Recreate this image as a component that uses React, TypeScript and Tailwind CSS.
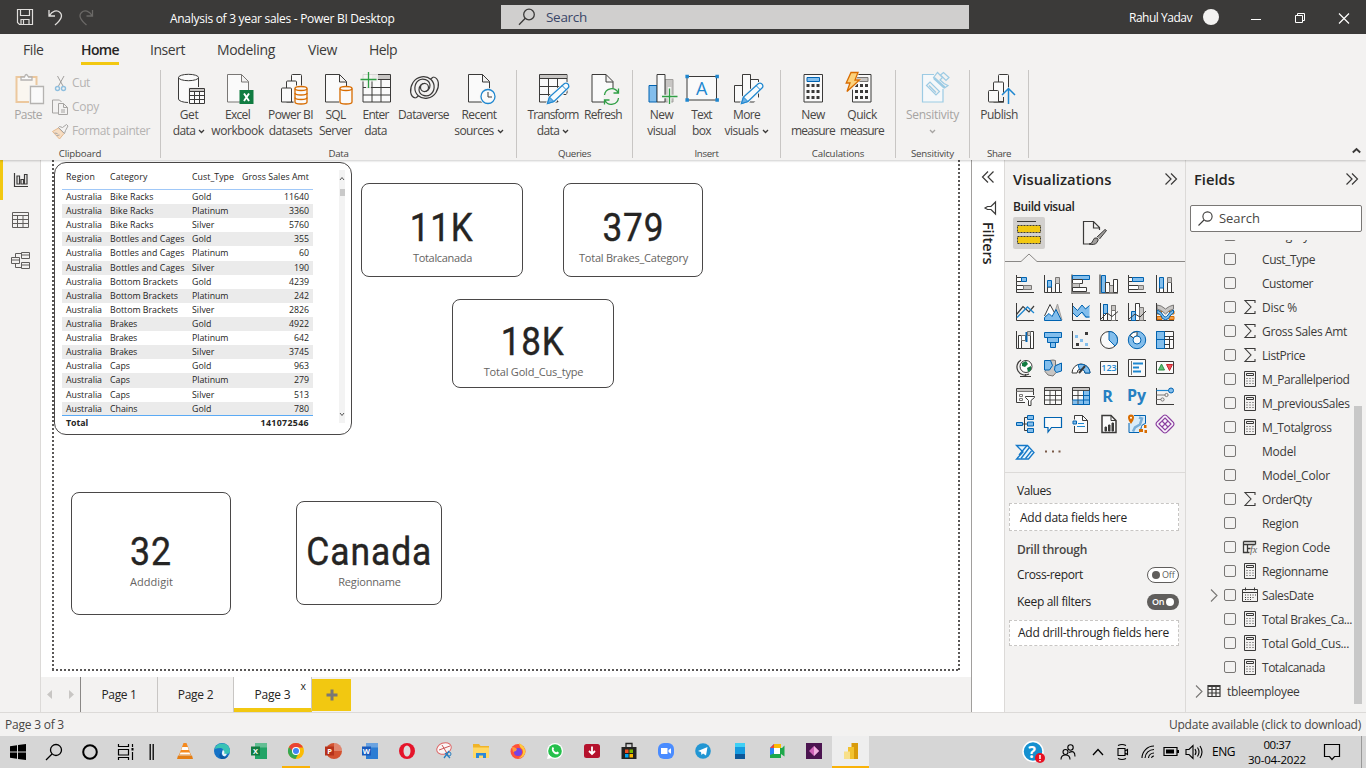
import { useLayoutEffect, useRef, useState, type ReactNode } from "react";

/* Text fitted to a known width, through tracking or horizontal scaling. */
function T({ w, children, className = "", stretch = false }: { w: number; children: string; className?: string; stretch?: boolean }) {
  const ref = useRef<HTMLSpanElement>(null);
  const [fit, setFit] = useState<{ letterSpacing?: string; transform?: string }>({});
  useLayoutEffect(() => {
    const el = ref.current;
    if (!el) return;
    const natural = el.getBoundingClientRect().width;
    if (stretch) setFit({ transform: `scaleX(${w / natural})` });
    else setFit({ letterSpacing: `${(w - natural) / children.length}px` });
  }, [w, children, stretch]);
  return (
    <span ref={ref} style={fit} className={`inline-block whitespace-nowrap ${className}`}>
      {children}
    </span>
  );
}

function Svg({ s = 20, h, children, className = "" }: { s?: number; h?: number; children: ReactNode; className?: string }) {
  return (
    <svg width={s} height={h ?? s} viewBox={`0 0 ${s} ${h ?? s}`} fill="none" className={`block shrink-0 overflow-visible ${className}`}>
      {children}
    </svg>
  );
}

const D = "#3b3a39";
const B = "#0063b1";
const LB = "#83beec";
const G = "#c8c6c4";
const OR = "#d86c00";

/* ---------- ribbon icons (34 x 34) ---------- */
const Page = ({ x = 6.5, stroke = D }) => (
  <path d={`M${x} 3.5h14l7 7v20.5h-21z M${x + 14} 3.5v7.5h7`} fill="#fafafa" stroke={stroke} />
);
const Pencil = () => (
  <>
    <path d="M11.5 32.5l2-6.500L28.500 12.500q2.500-1 4 1.200q1 2-.5 3.300L18 31z" fill="#fff" stroke="#f3f2f1" strokeWidth="3" />
    <path d="M11.500 32.500l2-6.500L28.500 12.500q2.500-1 4 1.200q1 2-.5 3.300L18 30.500z" fill="#f5fafd" stroke="#1e87d0" strokeWidth="1.300" />
    <path d="M11.500 32.500l2-6.500l4.500 4.500z" fill="#69afe5" stroke="#1e87d0" />
    <path d="M26 14.500l4.500 4.500" stroke="#1e87d0" />
  </>
);
const CylO = ({ x }: { x: number }) => (
  <g stroke={OR} strokeWidth="1.300" fill="#fafafa">
    <path d={`M${x} 17.500v13.500a6 2 0 0 0 12 0v-13.500`} />
    <ellipse cx={x + 6} cy="17.500" rx="6" ry="2" />
  </g>
);
const CalcDots = ({ x, y }: { x: number; y: number }) => (
  <path d={[0, 1, 2].map((r) => [0, 1, 2].map((c) => `M${x + c * 5} ${y + r * 6}h3v3h-3z`).join("")).join("")} fill={D} />
);

const R: Record<string, ReactNode> = {
  paste: (
    <g strokeWidth="1.300">
      <path d="M5.500 6h20v25h-20z" fill="#faf6f0" stroke="#ecc89e" strokeWidth="2" />
      <path d="M10 9V6h3.500q1.500-5 4 0H21v3z" fill="#fafafa" stroke="#b5b3b1" />
      <path d="M18 14h15v19H18z" fill="#f3f2f1" />
      <path d="M19.500 15.500h13v17h-13z" fill="#fafafa" stroke="#b5b3b1" />
    </g>
  ),
  get: (
    <>
      <path d="M6.500 6.500v21.500a10 3.500 0 0 0 20 0v-21.500" fill="#fafafa" stroke={D} />
      <ellipse cx="16.500" cy="6.500" rx="10" ry="3.200" fill="#fafafa" stroke={D} />
      <path d="M16 16h18v18H16z" fill="#f3f2f1" />
      <path d="M17.500 17.500h15v15h-15z" fill="#fafafa" stroke={D} />
      <path d="M18 18h14v2H18z" fill={G} />
      <path d="M17.500 20.500h15M17.500 24.500h15M17.500 28.500h15M22.500 20.500v12M27.500 20.500v12" stroke={D} />
    </>
  ),
  excel: (
    <>
      <Page stroke="#797775" />
      <path d="M18.500 19h14v14h-14z" fill="#107c41" />
      <path d="M23 22.500l5 7.500M28 22.500l-5 7.500" stroke="#fff" strokeWidth="1.900" />
    </>
  ),
  datasets: (
    <>
      <path d="M17.500 31V4.500q0-1 1-1h8q1 0 1 1V31z" fill="#fafafa" stroke={D} />
      <path d="M12.500 31V11q0-1 1-1h8q1 0 1 1v20z" fill="#fafafa" stroke={D} />
      <path d="M7.500 31V18q0-1 1-1h8q1 0 1 1v13z" fill="#fafafa" stroke={D} />
      <path d="M19.500 14.500h14.500V33H19.500z" fill="#f3f2f1" />
      <CylO x={21} />
      <path d="M21 22a6 2 0 0 0 12 0M21 26.500a6 2 0 0 0 12 0" stroke={OR} strokeWidth="1.300" />
    </>
  ),
  sql: (
    <>
      <Page />
      <path d="M20 15h14v18H20z" fill="#f3f2f1" />
      <CylO x={21} />
    </>
  ),
  enter: (
    <>
      <path d="M4 3.500h27.500v27.500H4z" fill="#fafafa" stroke={D} />
      <path d="M13 4h18v4H13z" fill={G} />
      <path d="M4 8.500h27.500M4 16.500h27.500M4 24h27.500M13 8.500V31M22 8.500V31" stroke={D} />
      <path d="M0 3h19v7.500H0zM7 0h5v18H7z" fill="#f3f2f1" opacity=".85" />
      <path d="M1.500 8.500h16M9.500 1v16" stroke="#2f9e44" strokeWidth="1.300" />
    </>
  ),
  dataverse: (
    <g stroke={D} strokeWidth="1.200">
      <path d="M8.500 27C3 26 2 18 6 11.500C10 5 19 4 24 8.500C28.500 13 28 20 23.500 23.500C19.500 26.500 12.500 24.500 12 19C11.800 14.500 15 12 18.500 12.500" />
      <path d="M26.500 6C32 7 33 15 29 21.500C25 28 16 29 11 24.500C6.500 20 7 13 11.500 9.500C15.500 6.500 22.500 8.500 23 14C23.200 18.500 20 21 16.500 20.500" />
      <path d="M8.500 27l3-2M26.500 6l-3 2" />
      <circle cx="17.500" cy="16.500" r="4" />
    </g>
  ),
  recent: (
    <>
      <Page />
      <circle cx="26" cy="25.500" r="8.500" fill="#f3f2f1" />
      <circle cx="26" cy="25.500" r="7" fill="#fafafa" stroke="#1e87d0" strokeWidth="1.300" />
      <path d="M26 21v5h4" stroke={D} />
    </>
  ),
  transform: (
    <>
      <path d="M3.500 3.500h27.500v27.500H3.500z" fill="#fafafa" stroke={D} />
      <path d="M4 4h26.500v3.500H4z" fill={G} />
      <path d="M3.500 7.500H31M3.500 15.500H31M3.500 23.500H31M12.500 7.500V31M21.500 7.500V31" stroke={D} />
      <path d="M19 34L34 20v14z" fill="#f3f2f1" />
      <Pencil />
    </>
  ),
  refresh: (
    <>
      <Page x={6} />
      <circle cx="25.500" cy="25.500" r="8.500" fill="#f3f2f1" />
      <path d="M18.500 24a7.200 7.200 0 0 1 13.500-2.500M32.500 27a7.200 7.200 0 0 1-13.500 2.500M32.500 17.500v4.500h-5M18.500 33.500V29h5" stroke="#2f9e44" strokeWidth="1.300" />
    </>
  ),
  visual: (
    <>
      <path d="M4 14.500h8V31H4z" fill={LB} stroke={B} />
      <path d="M20 8.500h8V31h-8z" fill={G} stroke="#a19f9d" />
      <path d="M12 3.500h8V31h-8z" fill="#fafafa" stroke={D} />
      <path d="M15 25.500h19M24.500 16v17" stroke="#f3f2f1" strokeWidth="3.500" />
      <path d="M17 25.500h15.500M24.500 17.500v15.500" stroke="#2f9e44" strokeWidth="1.300" />
    </>
  ),
  textbox: (
    <>
      <path d="M2 5.500h29.500V29H2z" fill="#fafafa" stroke={D} />
      <path d="M0 4h3.500v3.500H0zM30 4h3.500v3.500H30zM0 27.500h3.500V31H0zM30 27.500h3.500V31H30z" fill="#1e87d0" transform="translate(.4 -.2)" />
      <text x="16.700" y="23.500" textAnchor="middle" fontSize="18" fill="#1e87d0" fontFamily="Open Sans">A</text>
    </>
  ),
  more: (
    <>
      <path d="M4.500 14.500h8V31h-8zM20.500 8.500h8V31h-8zM12.500 3.500h8V31h-8z" fill="#fafafa" stroke={D} />
      <path d="M22 34l12-14v14z" fill="#f3f2f1" />
      <Pencil />
    </>
  ),
  measure: (
    <>
      <path d="M8 3.500h18.500V31H8z" fill="#fafafa" stroke={D} />
      <path d="M11 6.500h12.500v4H11z" fill={LB} stroke={B} />
      <CalcDots x={10.500} y={13} />
    </>
  ),
  quick: (
    <>
      <path d="M7.500 3.500h18.500V31H7.500z" fill="#fafafa" stroke={D} />
      <path d="M10.500 6.500H23v4H10.500z" fill={G} stroke="#797775" />
      <CalcDots x={10} y={13} />
      <path d="M6 0h9l-3.500 8h5L3 24l3-10H0z" fill="#f3f2f1" />
      <path d="M6 1.500h7L10 9h4.500L2 20.500L5 12H1.200z" fill="#fcd27c" stroke={OR} strokeWidth="1.300" />
    </>
  ),
  sensitivity: (
    <g stroke="#9ccbe4" strokeWidth="1.200">
      <path d="M18 3.500H6.500V31H27V18" fill="#f5f8fa" />
      <path d="M10.500 14.500l3.500-3.500L23.500 20.500l-3.500 3.500zM13 14.500l7 7" fill="#f3f2f1" />
      <path d="M17.500 6.500l4-5 5 5-2.500 2.500 4 3.500 4 2-3.500 2.500z" fill="#f3f2f1" />
      <path d="M24.500 4l3-2.500 5.500 5-3 3z" fill="#f3f2f1" />
      <path d="M18 7l10.500 9.500" strokeWidth="2.500" />
    </g>
  ),
  publish: (
    <>
      <path d="M16.500 31V4.500q0-1 1-1h8q1 0 1 1V31z" fill="#fafafa" stroke={D} />
      <path d="M11.500 31V12q0-1 1-1h8q1 0 1 1v19z" fill="#fafafa" stroke={D} />
      <path d="M6.500 20.500q0-1 1-1h8q1 0 1 1V31h-9q-1 0-1-1z" fill="#fafafa" stroke={D} />
      <path d="M17.500 26l9-10 8 9v9H22v-3.500h-4.500z" fill="#f3f2f1" />
      <path d="M17 30.500h5M21.500 26v4.500" stroke={D} />
      <path d="M26.500 33V17.500M20 24l6.500-6.500L33 24" stroke="#1e87d0" strokeWidth="1.500" />
    </>
  ),
};

const Caret = ({ c = D }) => (
  <Svg s={7} h={5}>
    <path d="M1 1l2.500 2.500L6 1" stroke={c} strokeWidth="1.300" />
  </Svg>
);

type Line = [string, number];
function Item({ icon, width, a, b, caret, muted }: { icon: string; width: string; a: Line; b?: Line; caret?: boolean; muted?: boolean }) {
  return (
    <div className={`flex shrink-0 flex-col items-center pt-px text-[12px] leading-4 ${width} ${muted ? "text-[#a6a4a2]" : "text-[#484644]"}`}>
      <Svg s={34}>{R[icon]}</Svg>
      <div className="mt-[2px] flex h-4"><T w={a[1]}>{a[0]}</T></div>
      <div className="flex h-4 items-center gap-[3px]">
        {b && <T w={b[1]}>{b[0]}</T>}
        {caret && <Caret c={muted ? "#a6a4a2" : D} />}
      </div>
    </div>
  );
}

function Group({ width, label, pad = "", children }: { width: string; label: Line; pad?: string; children: ReactNode }) {
  return (
    <div className={`flex h-[88px] shrink-0 flex-col border-r border-[#c8c6c4] ${width}`}>
      <div className={`flex h-[76px] shrink-0 ${pad}`}>{children}</div>
      <div className="flex h-3 justify-center text-[9.700px] leading-[15px] text-[#484644]"><T w={label[1]}>{label[0]}</T></div>
    </div>
  );
}

function Ribbon() {
  const tabs: [string, number, string][] = [
    ["Insert", 35, "ml-[31px]"],
    ["Modeling", 58, "ml-8"],
    ["View", 29, "ml-[33px]"],
    ["Help", 28, "ml-8"],
  ];
  return (
    <div className="relative z-10 h-[126px] shrink-0 bg-[#f3f2f1] shadow-[0_1px_2px_rgba(0,0,0,0.2)]">
      <div className="flex h-9 items-start pl-[23px] text-[14px] leading-8 text-[#3b3a39]">
        <T w={20.5}>File</T>
        <div className="ml-[37.5px] h-[31px] border-b-[3px] border-[#f2c811] leading-8 text-[#252423]">
          <T w={38} className="font-semibold">Home</T>
        </div>
        {tabs.map(([t, w, m]) => (
          <div key={t} className={m}><T w={w}>{t}</T></div>
        ))}
      </div>
      <div className="flex">
        <Group width="w-[161px]" label={["Clipboard", 42.5]}>
          <Item icon="paste" width="w-[52px] pl-1" a={["Paste", 27.5]} muted />
          <div className="flex flex-col pt-px text-[12px] text-[#b5b3b1]">
            <div className="flex h-6 items-center gap-[3px]">
              <Svg s={17}>
                <path d="M5.500 1l5.500 10M12 1L6.500 11" stroke="#a19f9d" />
                <circle cx="5.500" cy="13.500" r="2" stroke="#8fbfdf" strokeWidth="1.400" />
                <circle cx="11.500" cy="13.500" r="2" stroke="#8fbfdf" strokeWidth="1.400" />
              </Svg>
              <T w={18}>Cut</T>
            </div>
            <div className="flex h-6 items-center gap-[3px]">
              <Svg s={17}>
                <path d="M6.500 14H.5V1h7l2 2" stroke="#a6a4a2" />
                <path d="M6.500 4.500h5l4 4v7h-9zM11.500 4.500v4h4M9 11h4M9 13h4" stroke="#a6a4a2" />
              </Svg>
              <T w={27}>Copy</T>
            </div>
            <div className="flex h-6 items-center gap-[3px]">
              <Svg s={17}>
                <path d="M.5 8.500l6-3.500 5.500 5.500-4.500 5.500z" fill="#f6ddc3" stroke="#e5b98e" />
                <path d="M6.500 4.500l6 6 1-3 2.500-4.500-1.500-1.500-4 3-3-1zM2.500 10l3 .5M4.500 12.500l3-.5" stroke="#a6a4a2" />
              </Svg>
              <T w={78}>Format painter</T>
            </div>
          </div>
        </Group>
        <Group width="w-[356px]" label={["Data", 20]} pad="pl-1">
          <Item icon="get" width="w-[48px]" a={["Get", 18.5]} b={["data", 22.5]} caret />
          <Item icon="excel" width="w-[49px]" a={["Excel", 25]} b={["workbook", 52.5]} />
          <Item icon="datasets" width="w-[57px]" a={["Power BI", 45]} b={["datasets", 43.5]} />
          <Item icon="sql" width="w-[33px]" a={["SQL", 20]} b={["Server", 33]} />
          <Item icon="enter" width="w-[47px]" a={["Enter", 26]} b={["data", 22.5]} />
          <Item icon="dataverse" width="w-[49px]" a={["Dataverse", 51]} />
          <Item icon="recent" width="w-[62px]" a={["Recent", 35]} b={["sources", 39.5]} caret />
        </Group>
        <Group width="w-[116px]" label={["Queries", 33]} pad="pl-2.5">
          <Item icon="transform" width="w-[52px]" a={["Transform", 51]} b={["data", 22.5]} caret />
          <Item icon="refresh" width="w-[48px]" a={["Refresh", 38]} />
        </Group>
        <Group width="w-[148px]" label={["Insert", 24]} pad="pl-2">
          <Item icon="visual" width="w-[41px]" a={["New", 23.5]} b={["visual", 28.5]} />
          <Item icon="textbox" width="w-[39px]" a={["Text", 20.5]} b={["box", 19]} />
          <Item icon="more" width="w-[51px]" a={["More", 27]} b={["visuals", 34]} caret />
        </Group>
        <Group width="w-[115px]" label={["Calculations", 52.5]} pad="pl-2">
          <Item icon="measure" width="w-[48px]" a={["New", 23.5]} b={["measure", 44]} />
          <Item icon="quick" width="w-[50px]" a={["Quick", 29.5]} b={["measure", 44]} />
        </Group>
        <Group width="w-[74px]" label={["Sensitivity", 43]} pad="justify-center">
          <Item icon="sensitivity" width="w-[74px]" a={["Sensitivity", 53]} caret muted />
        </Group>
        <Group width="w-[59px]" label={["Share", 24]} pad="justify-center">
          <Item icon="publish" width="w-[58px]" a={["Publish", 37.5]} />
        </Group>
        <div className="flex flex-1 items-end justify-end pb-1 pr-[5px]">
          <Svg s={9} h={7}><path d="M.8 5.500L4.500 2l3.700 3.500" stroke={D} strokeWidth="1.900" /></Svg>
        </div>
      </div>
    </div>
  );
}

function TitleBar() {
  return (
    <div className="flex h-[34px] shrink-0 items-center bg-[#3b3a39] text-white">
      <div className="flex w-[170px] items-center pl-4">
        <Svg s={18}>
          <path d="M1.500 1.500h15v15h-13l-2-2zM4.500 1.500v6h9v-6M5 16.500v-5h8v5M7.500 12v4" stroke="#e1dfdd" strokeWidth="1.200" />
        </Svg>
        <Svg s={18} className="ml-[13px]">
          <path d="M2 2v6h6M2.500 7.500C5 3 10 1.500 13 4.500c3.500 3.500.500 7.500-5 12.500" stroke="#e1dfdd" strokeWidth="1.300" />
        </Svg>
        <Svg s={18} className="ml-3">
          <path d="M15.500 2v6h-6M15 7.500C12.500 3 7.500 1.500 4.500 4.500C1 8 4 12 9.500 17" stroke="#6b6967" strokeWidth="1.300" />
        </Svg>
      </div>
      <div className="w-[331px] pt-1 text-[12px] text-white"><T w={224.6}>Analysis of 3 year sales - Power BI Desktop</T></div>
      <div className="flex h-6 w-[468px] items-center gap-[10px] bg-[#d0cfce] pl-[17px] text-[13.500px] text-[#3a4668]">
        <Svg s={18}>
          <circle cx="11" cy="6.500" r="5.300" stroke={D} strokeWidth="1.300" />
          <path d="M7.300 10.300L1 16.700" stroke={D} strokeWidth="1.300" />
        </Svg>
        <T w={41} className="pt-px">Search</T>
      </div>
      <div className="flex flex-1 items-center pl-[160px]">
        <span className="pt-px text-[12px]"><T w={63}>Rahul Yadav</T></span>
        <div className="ml-[11px] size-4 rounded-full bg-[#f3f2f1]" />
        <Svg s={12} className="ml-[31px] mt-px"><path d="M1 7.500h10" stroke="#fff" /></Svg>
        <Svg s={12} className="ml-[32px] mt-px"><path d="M1.500 3.500h7v7h-7zM3.500 3.500v-2h7v7h-2" stroke="#fff" /></Svg>
        <Svg s={12} className="ml-8 mt-px"><path d="M1 1.500l10 10M11 1.500l-10 10" stroke="#fff" strokeWidth="1.200" /></Svg>
      </div>
    </div>
  );
}

/* ---------- canvas ---------- */
const rows: [string, string, string][] = [
  ["Bike Racks", "Gold", "11640"],
  ["Bike Racks", "Platinum", "3360"],
  ["Bike Racks", "Silver", "5760"],
  ["Bottles and Cages", "Gold", "355"],
  ["Bottles and Cages", "Platinum", "60"],
  ["Bottles and Cages", "Silver", "190"],
  ["Bottom Brackets", "Gold", "4239"],
  ["Bottom Brackets", "Platinum", "242"],
  ["Bottom Brackets", "Silver", "2826"],
  ["Brakes", "Gold", "4922"],
  ["Brakes", "Platinum", "642"],
  ["Brakes", "Silver", "3745"],
  ["Caps", "Gold", "963"],
  ["Caps", "Platinum", "279"],
  ["Caps", "Silver", "513"],
  ["Chains", "Gold", "780"],
];
const textWidth: Record<string, number> = {
  "Bike Racks": 43.5, "Bottles and Cages": 74.5, "Bottom Brackets": 68, Brakes: 27, Caps: 20, Chains: 27.5,
  Gold: 19.5, Platinum: 36.5, Silver: 22.5,
};

function TableVisual() {
  return (
    <div className="absolute left-[54px] top-[2px] flex h-[273px] w-[298px] rounded-[12px] border border-[#4a4848] bg-white pl-[7px] pt-[3px] text-[8.800px] text-[#252423]">
      <div className="w-[251px] shrink-0">
        <div className="grid h-6 grid-cols-[44px_82px_49px_76px] items-center border-b-[1.500px] border-b-[#a0c8f8]">
          <span className="pl-1"><T w={29}>Region</T></span>
          <span className="pl-1"><T w={37.5}>Category</T></span>
          <span className="pl-1"><T w={42}>Cust_Type</T></span>
          <span className="pr-1 text-right"><T w={67}>Gross Sales Amt</T></span>
        </div>
        {rows.map(([c, t, v], i) => (
          <div key={i} className={`grid h-[14.12px] grid-cols-[44px_82px_49px_76px] items-center pt-px leading-[13px] ${i % 2 ? "bg-[#ebebeb]" : ""}`}>
            <span className="pl-1"><T w={36}>Australia</T></span>
            <span className="pl-1"><T w={textWidth[c]}>{c}</T></span>
            <span className="pl-1"><T w={textWidth[t]}>{t}</T></span>
            <span className="pr-1 text-right"><T w={v.length * 5}>{v}</T></span>
          </div>
        ))}
        <div className="relative -mt-px flex h-[17px] items-center justify-between border-t border-t-[#5aaaf5] px-1 font-bold">
          <T w={22}>Total</T>
          <T w={48.5}>141072546</T>
        </div>
      </div>
      <div className="ml-[26px] mt-[4px] flex h-[253px] w-[6px] flex-col items-center justify-between bg-[#f3f3f3] py-1.5">
        <div className="flex flex-col items-center">
          <Svg s={6} h={5}><path d="M1 4l2-2.500L5 4" stroke="#555" /></Svg>
          <div className="mt-2 h-[7px] w-[5px] bg-[#c9c9c9]" />
        </div>
        <Svg s={6} h={5}><path d="M1 1l2 2.500L5 1" stroke="#555" /></Svg>
      </div>
    </div>
  );
}

function Card({ pos, value, label, pad }: { pos: string; value: Line; label: Line; pad: string }) {
  return (
    <div className={`absolute flex flex-col items-center rounded-[8px] border border-[#4a4848] bg-white ${pos} ${pad}`}>
      <div className="flex h-[46px] items-center justify-center font-['Roboto',sans-serif] text-[39px] font-normal leading-[48px] text-[#252423] [-webkit-text-stroke:0.4px_#252423]">
        <T w={value[1]} stretch className="relative top-px tracking-[1px]">{value[0]}</T>
      </div>
      <div className="flex h-4 pl-px text-[11px] leading-4 text-[#666462]"><T w={label[1]}>{label[0]}</T></div>
    </div>
  );
}

const dotsV = "w-[2px] bg-[repeating-linear-gradient(180deg,#5a5857_0_2px,transparent_2px_4px)]";

function Canvas() {
  return (
    <div className="relative h-[517px] overflow-hidden bg-white">
      <div className={`absolute left-[11px] top-0 h-[511px] ${dotsV}`} />
      <div className={`absolute left-[917px] top-0 h-[511px] ${dotsV}`} />
      <div className="absolute left-[11px] top-[509px] h-[2px] w-[908px] bg-[repeating-linear-gradient(90deg,#5a5857_0_2px,transparent_2px_4px)]" />
      <div className="absolute -left-[41px] top-0">
        <TableVisual />
        <Card pos="left-[361px] top-[23px] w-[162px] h-[94px]" pad="pt-5" value={["11K", 64]} label={["Totalcanada", 59]} />
        <Card pos="left-[563px] top-[23px] w-[140px] h-[94px]" pad="pt-5" value={["379", 62]} label={["Total Brakes_Category", 109]} />
        <Card pos="left-[452px] top-[139px] w-[162px] h-[89px]" pad="pt-[18px]" value={["18K", 64]} label={["Total Gold_Cus_type", 99.5]} />
        <Card pos="left-[71px] top-[332px] w-[160px] h-[123px]" pad="pt-[35px]" value={["32", 42]} label={["Adddigit", 43]} />
        <Card pos="left-[296px] top-[341px] w-[146px] h-[104px]" pad="pt-[26px]" value={["Canada", 126]} label={["Regionname", 62.5]} />
      </div>
    </div>
  );
}

function PageTabs() {
  return (
    <div className="flex h-[35px] bg-[#f3f2f1] text-[12px] text-[#252423]">
      <div className="flex w-[40px] items-center justify-between border-r border-[#8a8886] pl-1.5 pr-1.5">
        <Svg s={5} h={9}><path d="M5 0v9L0 4.500z" fill={G} /></Svg>
        <Svg s={5} h={9}><path d="M0 0v9l5-4.500z" fill={G} /></Svg>
      </div>
      <div className="flex w-[77px] items-center justify-center border-r border-[#c8c6c4]"><T w={35}>Page 1</T></div>
      <div className="flex w-[76px] items-center justify-center border-r border-[#c8c6c4]"><T w={35.500}>Page 2</T></div>
      <div className="relative flex h-[35px] w-[78px] items-center justify-center border-b-[4px] border-r border-b-[#f2c811] border-r-[#c8c6c4] bg-white pt-1">
        <T w={36}>Page 3</T>
        <span className="absolute right-[5px] top-px text-[10.500px] leading-4">x</span>
      </div>
      <div className="mt-[2px] flex h-8 w-[39px] items-center justify-center bg-[#f2c811]">
        <Svg s={12}><path d="M6 .5v11M.5 6h11" stroke="#797775" strokeWidth="3" /></Svg>
      </div>
    </div>
  );
}

/* ---------- visual picker icons (20 x 20) ---------- */
const Ax = () => <path d="M1.500 1v17.500H19" stroke={D} />;
const visuals: ReactNode[] = [
  <><Ax /><path d="M1.500 3.500h5v4h-5zM1.500 11.500h7v4h-7z" fill="#fff" stroke={D} /><path d="M6.500 3.500h5v4h-5z" fill={LB} stroke={B} /><path d="M8.500 11.500h8v4h-8z" fill={G} stroke="#797775" /></>,
  <><Ax /><path d="M4.500 13h4v5.500h-4zM12.500 9.500h4v9h-4z" fill="#fff" stroke={D} /><path d="M4.500 6.500h4v6.500h-4z" fill={LB} stroke={B} /><path d="M12.500 3.500h4v6h-4z" fill={G} stroke="#797775" /></>,
  <><path d="M1 .5v18.500H19" stroke="#8a8886" strokeWidth="2" /><path d="M1.500 1.500h17v4h-17z" fill={LB} stroke={B} /><path d="M1.500 5.500h10v4h-10z" fill="#fff" stroke={D} /><path d="M1.500 9.500h7v4h-7z" fill={G} stroke="#797775" /><path d="M1.500 13.500h14v4h-14z" fill="#fff" stroke={D} /></>,
  <><path d="M1 .5v18.500H19" stroke="#8a8886" strokeWidth="2" /><path d="M2.500 1.500h4v17h-4z" fill={LB} stroke={B} /><path d="M6.500 8.500h4v10h-4z" fill="#fff" stroke={D} /><path d="M10.500 11.500h4v7h-4z" fill={G} stroke="#797775" /><path d="M14.500 5.500h4v13h-4z" fill="#fff" stroke={D} /></>,
  <><Ax /><path d="M1.500 3.500h4v4h-4zM1.500 11.500h10v4h-10z" fill="#fff" stroke={D} /><path d="M5.500 3.500h11v4h-11z" fill={LB} stroke={B} /><path d="M11.500 11.500h5v4h-5z" fill={G} stroke="#797775" /></>,
  <><Ax /><path d="M4.500 13h4v5.500h-4zM12.500 8.500h4v10h-4z" fill="#fff" stroke={D} /><path d="M4.500 3.500h4V14h-4z" fill={LB} stroke={B} /><path d="M12.500 3.500h4v5h-4z" fill={G} stroke="#797775" /></>,
  <><Ax /><path d="M1.500 12.500L8 4.500l6 5.500 5-6" stroke={D} strokeWidth="1.200" /><path d="M2 15.500L12.500 5l6.500 6" stroke="#1e87d0" strokeWidth="1.300" /></>,
  <><path d="M9 18l5.500-16 4.500 16z" fill={G} stroke="#a19f9d" /><path d="M1.500 14L7 2.500l6 11" fill="#fff" stroke={D} /><path d="M1.500 18.500v-3L6 11.500l3 3L13 7.500l5.500 11z" fill={LB} stroke={B} /></>,
  <><path d="M2 4l4.500 4.500L11 3l3 3.500 4.500-3v12l-4 .500-4-5-5 4L2 11z" fill={LB} /><path d="M2 4l4.500 4.500L11 3l3.500 4 4-3.500M2 11l4 4 5-5 4 5h3.500" stroke={B} /><Ax /></>,
  <><Ax /><path d="M4.500 2.500h4v16h-4z" fill="#fff" stroke={D} /><path d="M4.500 2.500h4v9h-4z" fill={LB} stroke={B} /><path d="M12.500 3.500h4v15h-4z" fill="#fff" stroke="#797775" /><path d="M12.500 3.500h4v5h-4z" fill={G} stroke="#797775" /><path d="M2 17l6-6 5 3.500 6-5" stroke={D} /></>,
  <><Ax /><path d="M8.500 1.500h4v17h-4z" fill="#fff" stroke={D} /><path d="M4.500 9.500h4v9h-4z" fill={LB} stroke={B} /><path d="M12.500 5.500h4v13h-4z" fill={G} stroke="#797775" /><path d="M2 17l6-5 5 3 6-6" stroke={D} /></>,
  <><path d="M2 9h4.500v3H2zM14.500 9H19v3h-4.500zM2 14.500h5v3H2zM14 14.500h5v3h-5z" fill="#f4a04d" stroke={OR} /><path d="M2 3q4 0 8.500 4Q14 4 18.500 3v4q-4.500 1-8 5Q7 8 2 7z" fill={G} stroke="#797775" /><path d="M2 8q4 1 6 5t5 0q2-4 5.500-5v3q-3 1-5 5.500-3 2.500-6 0-1-4.500-5.500-5.500z" fill={LB} stroke={B} /><path d="M1.500 1v17.500H19" stroke={D} /></>,
  <><Ax /><path d="M3.500 5.500h3v13h-3zM15.500 1.500h3v17h-3z" fill="#fff" stroke={D} /><path d="M6.500 5.500h4v5h-4z" fill="#fff" stroke="#797775" /><path d="M11.500 2v10" stroke={B} strokeWidth="2" /><path d="M12.500 1.500h3v4h-3z" fill={G} stroke="#797775" /></>,
  <><path d="M1.500 2.500h17v5h-17zM4.500 7.500h11v5h-11zM7.500 12.500h5v5h-5z" fill={LB} stroke={B} /></>,
  <><Ax /><path d="M14 2h3v3h-3zM5 13h3v3H5z" fill={D} /><path d="M4 5h3v3H4zM9 9h3v3H9zM14 13h3v3h-3z" fill={LB} /></>,
  <><circle cx="10" cy="10" r="8.500" fill="#fafafa" stroke={D} /><path d="M10 1.500v8.500l6 6A8.500 8.500 0 0 0 10 1.500z" fill={LB} stroke={B} /></>,
  <><circle cx="10" cy="10" r="6.300" stroke={LB} strokeWidth="4.500" /><path d="M3 5.500A8.500 8.500 0 0 1 10 1.500V6A4 4 0 0 0 6.500 8z" fill="#fff" stroke={D} /><circle cx="10" cy="10" r="8.700" stroke={B} /><circle cx="10" cy="10" r="4" fill="#fafafa" stroke={B} /></>,
  <><path d="M1.500 1.500h17v17h-17z" fill="#fafafa" stroke={D} /><path d="M1.500 1.500h8v17h-8z" fill={LB} stroke={B} /><path d="M1.500 9.500h8" stroke={B} /><path d="M9.500 9.500h9M9.500 6.500h9M14.500 6.500v12M9.500 14.500h5" stroke={D} /></>,
  <><circle cx="11" cy="8.500" r="6" fill="#fff" stroke={D} /><path d="M7 5l4-2 2 3-3 3-3-1zM12 10l4-2v4l-3 2z" fill="#107c41" /><path d="M6 2A8 8 0 0 0 14 16M10.500 16v3M5 18.500h11" stroke={D} strokeWidth="1.200" /></>,
  <><path d="M6.500 2.500q4-1 6 0v5l6-2-.500 7-4 1-4 4.500-5-1-3-3.500z" fill={G} stroke="#797775" /><path d="M1.500 2.500h6l2 5-3 4.500h-5zM12 8l6.500-3v8l-5 1.500-2-2.500z" fill={LB} stroke={B} /></>,
  <><path d="M1 15a9 9 0 0 1 18 0h-5a4 4 0 0 0-8 0z" fill="#fff" stroke={D} /><path d="M7 6.800A9 9 0 0 1 19 15h-5a4 4 0 0 0-5.500-3.500z" fill={LB} stroke={B} /><path d="M8 15l6-7" stroke={D} strokeWidth="2" /></>,
  <><path d="M1.500 3.500h17v13h-17z" fill="#fafafa" stroke={D} /><text x="10" y="13.400" textAnchor="middle" fontSize="9" fill="#1e87d0" fontFamily="Open Sans" fontWeight="600">123</text></>,
  <><path d="M1.500 1.500h17v17h-17z" fill="#fafafa" stroke={D} /><path d="M4.500 3v14" stroke="#797775" /><path d="M6 5.500h10M6 9.500h6M6 13.500h8" stroke="#1e87d0" strokeWidth="2" /></>,
  <><path d="M1.500 3.500h17v12h-17z" fill="#fafafa" stroke={D} /><path d="M3.500 12L6.500 6l3 6z" fill="#5fbf75" stroke="#2f8f44" /><path d="M11.500 6.500h6l-3 6z" fill="#f0525a" stroke="#c4262e" /></>,
  <><path d="M1.500 2.500h17v14h-17z" fill="#fafafa" /><path d="M10 16.500H1.500V2.500h17V9" stroke={D} /><path d="M2 3h16v2.500H2z" fill={G} /><path d="M1.500 5.500h17M4.500 8.500h3v2h-3zM4.500 12.500h3v2h-3z" stroke="#797775" /><path d="M10.500 10.500h9v1l-3.500 3v5h-2.500v-5l-3-3z" fill="#fff" stroke={D} /></>,
  <><path d="M1.500 1.500h17v17h-17z" fill="#fafafa" stroke={D} /><path d="M2 2h16v2.500H2z" fill={G} /><path d="M1.500 4.500h17M1.500 9.500h17M1.500 14h17M7 4.500v14M12.500 4.500v14" stroke={D} strokeWidth=".9" /></>,
  <><path d="M1.500 1.500h17v17h-17z" fill="#fafafa" stroke={D} /><path d="M2 2h16v2.500H2z" fill={G} /><path d="M12.500 5h6v13.500h-17V14h11z" fill={LB} /><path d="M1.500 4.500h17M1.500 9.500h17M7 4.500v14M12.500 4.500v5" stroke={D} strokeWidth=".9" /><path d="M12.500 5v13.500M1.500 14h17M1.500 18.500h17v-14M12.500 9.500h6" stroke={B} /></>,
  <text x="8.500" y="15.500" textAnchor="middle" fontSize="16" fill="#2680c2" fontFamily="Open Sans" fontWeight="700">R</text>,
  <text x="9.500" y="14.500" textAnchor="middle" fontSize="16" fill="#2680c2" fontFamily="Open Sans" fontWeight="700">Py</text>,
  <><path d="M1.500 2v16.500H19" stroke={D} /><path d="M1.500 4.500H13.500" stroke="#1e87d0" strokeWidth="1.200" /><path d="M1.500 9h8.500M1.500 13.500h4.500" stroke="#797775" /><circle cx="16" cy="4.500" r="2.500" fill={LB} stroke={B} /><circle cx="11.500" cy="9" r="1.600" stroke="#797775" /><circle cx="7.500" cy="13.500" r="1.600" stroke="#797775" /></>,
  <><path d="M7 10h5.500M9.500 10V3.500h3M9.500 10v6.500h3" stroke={D} /><path d="M1.500 8.500h6v3h-6zM12.500 1.500h6v4h-6zM12.500 8h6v4h-6zM12.500 14.500h6v4h-6z" fill={LB} stroke={B} /></>,
  <path d="M1.500 3.500h17v10H8.500L5 18v-4.500H1.500z" fill="#fafafa" stroke={B} strokeWidth="1.200" />,
  <><path d="M3.500 12v6.500h13V6.500l-5-5h-8v4" fill="#fafafa" stroke={D} /><path d="M11.500 1.500v5h5" stroke={D} /><path d="M2 7h3.500v3H2z" fill={LB} stroke={B} /><path d="M7 9.500h6M6 12.500h8" stroke="#1e87d0" /></>,
  <><path d="M3 1.500h9l5 5v12H3z" fill="#fafafa" stroke={D} strokeWidth="1.500" /><path d="M12 1.500v5h5" stroke={D} /><path d="M6 13h1.500v4H6zM9.500 11H11v6H9.500zM13 9h1.500v8H13z" fill={D} stroke={D} /></>,
  <><path d="M7 1.500h11.500v8q-4 1-4 3t-2.500 6H2V9" fill="#d9ecf9" stroke={B} /><path d="M12 3.500l3 1-2 6-5 3-2 4" stroke={B} strokeWidth="2.500" opacity=".45" /><path d="M4 10Q1 6 1 3.500a3 3 0 0 1 6 0Q7 6 4 10zM17 11h2.500v3H17zM12 15h4v3h-4zM17.500 16h2.500v3h-2.500z" fill={OR} /><circle cx="4" cy="3.800" r="1" fill="#fff" /></>,
  <g stroke="#8b3fa0" strokeWidth="1.200"><path d="M10 1q1.500 0 3 2l4 4q2 1.500 2 3t-2 3l-4 4q-1.500 2-3 2t-3-2l-4-4q-2-1.500-2-3t2-3l4-4q1.500-2 3-2z" fill="#faf5fb" /><path d="M10 4l3 3-3 3-3-3zM10 10l3 3-3 3-3-3zM4 10l3-3 3 3-3 3zM10 10l3-3 3 3-3 3z" /></g>,
  <><path d="M1.500 3.500h11l6.500 7-5.500 6.500H1.500L8 10z" fill="#eaf5fc" stroke="#1478c8" strokeWidth="1.300" /><path d="M6 16.500L14 6M10.500 16.500l6-7.500M4 13l8-9.500" stroke="#1478c8" strokeWidth="1.300" /></>,
  <path d="M2 8.500h2v2H2zM9 8.500h2v2H9zM15.500 8.500h2v2h-2z" fill="#7a5a48" />,
];

const DoubleChevron = ({ left = false }) => (
  <Svg s={14} className={left ? "rotate-180" : ""}>
    <path d="M1.500 1.500L7 7l-5.500 5.500M7 1.500L12.500 7 7 12.500" stroke={D} strokeWidth="1.200" />
  </Svg>
);

function Filters() {
  return (
    <div className="flex w-[33px] shrink-0 flex-col items-center border-l border-[#a19f9d] bg-white pt-[10px]">
      <DoubleChevron left />
      <Svg s={14} className="ml-1 mt-[17px]">
        <path d="M12.500 1v12L8 8.500H4.500L2 7l2.500-1.500H8z" stroke={D} strokeWidth="1.200" />
      </Svg>
      <div className="mt-[7px] flex h-[44px] items-center text-[14.500px] font-semibold leading-[18px] text-[#252423] [writing-mode:vertical-rl]">
        <span className="tracking-[-0.100px]">Filters</span>
      </div>
    </div>
  );
}

function Visualizations() {
  const drop = "flex items-center border border-dashed border-[#c8c6c4] bg-white";
  return (
    <div className="flex w-[182px] shrink-0 flex-col border-x border-[#dcdad8] bg-[#f3f2f1] text-[#252423]">
      <div className="flex h-[38px] items-center justify-between pl-2 pr-[7px] text-[14.800px] font-semibold"><T w={98.500} className="pt-px">Visualizations</T><DoubleChevron /></div>
      <div className="flex h-[18px] items-center pl-2 text-[12px] font-semibold"><T w={61.500}>Build visual</T></div>
      <div className="mt-px flex pl-2">
        <div className="flex h-8 w-8 items-center justify-center rounded-[2px] bg-[#d2d0ce]">
          <Svg s={26}>
            <path d="M1 1.500h19" stroke={D} />
            <path d="M1.500 5.500h23v7h-23zM1.500 16.500h23v7h-23z" fill="#f2c811" stroke={D} strokeDasharray="2 1" />
          </Svg>
        </div>
        <Svg s={26} className="ml-[36px] mt-[3px]">
          <path d="M12 24H2.500V1.500h10l6 6V10M12.500 1.500v6.500h6" stroke={D} strokeWidth="1.200" />
          <path d="M8 24q3 0 4-3.500t4-2.500q2.500 1.500 0 4.500T8 24zM16 17l8-7.500 1.500 1L18.500 19" fill="#a19f9d" stroke={D} />
        </Svg>
      </div>
      <Svg s={180} h={9} className="mt-[4px]">
        <path d="M0 8.500h16l8-7.500 8 7.500h148" stroke="#8a8886" />
      </Svg>
      <div className="mt-[8px] grid grid-cols-6 auto-rows-[28px] pl-1.5 pr-[6px]">
        {visuals.map((v, i) => (
          <div key={i} className="flex items-center justify-center"><Svg s={20}>{v}</Svg></div>
        ))}
      </div>
      <div className="mt-[6px] border-t border-[#dcdad8] px-1 pt-[9px] text-[12px] text-[#252423]">
        <div className="flex h-[17px] items-center pl-2"><T w={34}>Values</T></div>
        <div className={`mt-1 h-[28px] w-[170px] pl-[10px] pt-px ${drop}`}><T w={107}>Add data fields here</T></div>
        <div className="mt-[10px] flex h-[17px] items-center pl-2 pt-px font-semibold text-[#484644]"><T w={70}>Drill through</T></div>
        <div className="mt-[5px] flex h-[24px] items-center justify-between pl-2 pr-[2px]">
          <T w={66}>Cross-report</T>
          <div className="flex h-4 w-8 items-center gap-[2px] rounded-full border border-[#605e5c] bg-white pl-1 text-[9px] text-[#605e5c]"><span className="size-2 rounded-full bg-[#605e5c]" /><T w={12.500}>Off</T></div>
        </div>
        <div className="mt-[3px] flex h-[24px] items-center justify-between pl-2 pr-[2px]">
          <T w={74}>Keep all filters</T>
          <div className="flex h-4 w-8 items-center gap-[2px] rounded-full bg-[#605e5c] pl-[5px] text-[9px] font-semibold text-white"><T w={12}>On</T><span className="size-2 rounded-full bg-white" /></div>
        </div>
        <div className={`mt-[6px] h-[26px] w-[170px] pl-[8px] ${drop}`}><T w={151}>Add drill-through fields here</T></div>
      </div>
    </div>
  );
}

/* ---------- fields ---------- */
const fieldIcon: Record<string, ReactNode> = {
  sum: <path d="M13 4V1.500H3L9 8l-6 6.500h10V12" stroke={D} strokeWidth="1.100" />,
  calc: <><path d="M2.500.5h11v15h-11z" stroke={D} /><path d="M4.500 2.500h7v2h-7z" stroke={D} /><path d="M4.500 7.500h1M7.500 7.500h1M10.500 7.500h1M4.500 10h1M7.500 10h1M10.500 10h1M4.500 12.500h1M7.500 12.500h1M10.500 12.500h1" stroke={D} /></>,
  fx: <><path d="M1.500 2.500h12v3M1.500 2.500v11h6M1.500 5.500h12M5.500 5.500v8M5.500 9.500h3" stroke={D} strokeWidth="1.300" /><text x="8" y="14" fontSize="10" fontStyle="italic" fill="#605e5c" fontFamily="Liberation Serif">fx</text></>,
  date: <><path d="M.5 2.500h15v12H.5zM.5 5.500h15M3.500.5v3M12.500.5v3" stroke={D} /><path d="M3 8h1M5.500 8h1M8 8h1M10.500 8h1M13 8h1M3 10.500h1M5.500 10.500h1M8 10.500h1M10.500 10.500h1M3 12.500h1M5.500 12.500h1M8 12.500h1" stroke={D} /></>,
};
const fields: [string, number, string?][] = [
  ["Category", 47],
  ["Cust_Type", 53],
  ["Customer", 51],
  ["Disc %", 35, "sum"],
  ["Gross Sales Amt", 85, "sum"],
  ["ListPrice", 43, "sum"],
  ["M_Parallelperiod", 87.500, "calc"],
  ["M_previousSales", 87.500, "calc"],
  ["M_Totalgross", 69.500, "calc"],
  ["Model", 34],
  ["Model_Color", 68],
  ["OrderQty", 49.500, "sum"],
  ["Region", 36.500],
  ["Region Code", 68, "fx"],
  ["Regionname", 66, "calc"],
  ["SalesDate", 51.500, "date"],
  ["Total Brakes_Ca...", 90, "calc"],
  ["Total Gold_Cus...", 87, "calc"],
  ["Totalcanada", 63, "calc"],
];

const Expand = () => <Svg s={8} h={13}><path d="M1 .5l6 6-6 6" stroke="#797775" strokeWidth="1.100" /></Svg>;

function Fields() {
  return (
    <div className="relative flex w-[180px] shrink-0 flex-col bg-[#f3f2f1] text-[#252423]">
      <div className="flex h-[38px] items-center justify-between pl-2 pr-[7px] text-[14.800px] font-semibold"><T w={41} className="pt-px">Fields</T><DoubleChevron /></div>
      <div className="ml-1 mt-[7px] flex h-[27px] w-[172px] shrink-0 items-center gap-1.5 rounded-[2px] border border-[#797775] bg-white pl-1.5 text-[13px] text-[#484644]">
        <Svg s={16}><circle cx="10.500" cy="5.500" r="4.600" stroke={D} strokeWidth="1.100" /><path d="M7 9L1.500 14.500" stroke={D} strokeWidth="1.100" /></Svg>
        <T w={41} className="pt-px">Search</T>
      </div>
      <div className="mt-2 h-[466px] overflow-hidden text-[12px] text-[#3b3a39]">
        <div className="-mt-[17px]">
          {fields.map(([name, w, icon]) => (
            <div key={name} className="flex h-6 items-center pl-6">
              <div className="w-[14px]">{name === "SalesDate" && <Expand />}</div>
              <div className="size-3 rounded-[2px] border border-[#797775]" />
              <div className="ml-[6px] w-5"><Svg s={16}>{icon && fieldIcon[icon]}</Svg></div>
              <T w={w} className="relative top-px">{name}</T>
            </div>
          ))}
          <div className="flex h-6 items-center pl-[9px]">
            <Expand />
            <Svg s={14} className="ml-1 mr-[6px]"><path d="M1 1.500h12v11H1zM1 5.500h12M1 9h12M5 1.500v11M9 1.500v11M1 2.500h12" stroke={D} strokeWidth="1.200" /></Svg>
            <T w={72.500} className="relative top-px">tbleemployee</T>
          </div>
        </div>
      </div>
      <div className="absolute left-[168px] top-[246px] h-[298px] w-2 bg-[#c8c8c8]" />
    </div>
  );
}

function Rail() {
  return (
    <div className="flex w-[41px] shrink-0 flex-col border-r border-[#dcdad8] bg-[#f3f2f1]">
      <div className="flex h-10 items-center border-l-[3px] border-[#f2c811] pl-[10px]">
        <Svg s={16}><path d="M1.500 1v13.500H15M4 12V4h2.500V12zM8 12V7.500h2.500V12zM11.500 12V2.500H14V12z" stroke={D} strokeWidth="1.200" /></Svg>
      </div>
      <div className="flex h-10 items-center justify-center pl-px">
        <Svg s={17}><path d="M.5.5h16v15H.5zM.5 3.500h16M.5 7.500h16M.5 11.500h16M5.500 3.500v12M11 3.500v12" stroke="#605e5c" /></Svg>
      </div>
      <div className="flex h-10 items-center justify-center pl-px">
        <Svg s={19}><path d="M.5 6.500h8v6h-8zM.5 9h8M10.500 1.500h8v6h-8zM10.500 4h8M10.500 11.500h8v6h-8zM10.500 14h8M4.500 6.500v-4h6M4.500 12.500v4h6" stroke="#605e5c" /></Svg>
      </div>
    </div>
  );
}

/* ---------- taskbar ---------- */
const Office = ({ c, d, letter, round }: { c: string; d: string; letter: string; round?: boolean }) => (
  <>
    {round ? <circle cx="10" cy="9" r="8" fill={c} /> : <path d="M5 1h12v16H5z" fill={c} />}
    <path d={round ? "M10 1a8 8 0 0 1 8 8h-8z" : "M5 1h12v4.500H5z"} fill="#fff" opacity=".3" />
    <path d="M1 4.500h9v9H1z" fill={d} />
    <text x="5.500" y="11.800" fontSize="7.500" fontWeight="700" fill="#fff" textAnchor="middle" fontFamily="Open Sans">{letter}</text>
  </>
);
const apps: ReactNode[] = [
  <><path d="M7.500 1h3L15 13H3z" fill="#f58a1f" /><path d="M6.300 5h5.400l1 3H5.300z" fill="#fff" /><path d="M2 13.500h14l1 3.500H1z" fill="#e57e14" /><path d="M4.500 10.500h9l.8 2H3.700z" fill="#fff" /></>,
  <><circle cx="9" cy="9" r="8" fill="#1572c6" /><path d="M1.500 7a8 8 0 0 1 15.500 1q.500 4-4 4-3 0-2.500-2 1-3-2.500-4-3.500 0-6.500 1z" fill="#38c3b5" /><path d="M10 8q-3 1-2 4t7 2.500a8 8 0 0 1-7 2.500Q4 13 10 8z" fill="#0c59a4" /><path d="M10 7.500q2 2 1 4l3 .500-2 2.500q-5-1-2-7z" fill="#e8f5fb" /></>,
  <Office c="#21a366" d="#107c41" letter="X" />,
  <><circle cx="9" cy="9" r="8" fill="#fbbc05" /><path d="M2 5a8 8 0 0 0 6.500 12l3.500-6.500L9 9z" fill="#34a853" /><path d="M1.900 5A8 8 0 0 1 16 5.500H9L6 10z" fill="#ea4335" /><circle cx="9" cy="9" r="4" fill="#fff" /><circle cx="9" cy="9" r="3" fill="#4285f4" /></>,
  <Office c="#d35230" d="#b7321a" letter="P" round />,
  <Office c="#2b7cd3" d="#185abd" letter="W" />,
  <><ellipse cx="9" cy="9" rx="8" ry="8" fill="#e5142a" /><ellipse cx="9" cy="9" rx="3.500" ry="5.600" fill="#dcdcdc" /></>,
  <><ellipse cx="9" cy="6.500" rx="7.500" ry="5.500" fill="#faf6f6" stroke="#d66" strokeWidth="1" transform="rotate(-20 9 6.500)" /><path d="M4 8l11-4M7 3l6 10" stroke="#c55" /><path d="M9 16l5-7M15 16l-5-5" stroke="#2a7fc0" strokeWidth="1.300" /><circle cx="14" cy="12" r="2" stroke="#2a7fc0" /></>,
  <><path d="M1 2h6l1.500 2H17v12H1z" fill="#f0b429" /><path d="M1 5.500h16V16H1z" fill="#ffd865" /><path d="M4 16v-5h10v5h-3v-2.500H7V16z" fill="#2b88d8" /></>,
  <><circle cx="9" cy="9.500" r="7.500" fill="#ff5139" /><path d="M10 1q6 3 6.500 9-1 5-7 6.500 6-4 4-9-3-2-3.500-6.500z" fill="#ffc93c" /><circle cx="9" cy="10" r="4" fill="#7542e5" /><path d="M3 5q3 0 5 2l-1 2-3 1z" fill="#ff9a3c" /></>,
  <><circle cx="9" cy="9" r="8" fill="#fff" /><circle cx="9" cy="9" r="6.800" fill="#25c04c" /><path d="M1 17l1.300-5 3.700 4z" fill="#fff" /><path d="M6 5.500q1.500-1 2 1l-.5 1.200q1 2 2.800 2.500l1-.8q2 .500 1.400 2-1.500 1.800-4.500 0T6 5.500z" fill="#fff" /></>,
  <><rect x="1" y="2" width="16" height="14" rx="2.500" fill="#b5122d" /><path d="M9 4.500V12M6 9l3 3 3-3" stroke="#fff" strokeWidth="1.800" /></>,
  <><path d="M1.500 5h15v12h-15z" fill="#222" /><path d="M6 5V1.500h6V5" stroke="#222" strokeWidth="1.300" /><path d="M5 7.500h3.500V11H5z" fill="#f25022" /><path d="M9.500 7.500H13V11H9.500z" fill="#7fba00" /><path d="M5 12h3.500v3.500H5z" fill="#00a4ef" /><path d="M9.500 12H13v3.500H9.500z" fill="#ffb900" /></>,
  <><rect x="1" y="1" width="16" height="16" rx="6" fill="#4a8cff" /><path d="M4 6h6.500v6H4zM11.500 8L14 6.300v5.500L11.500 10z" fill="#fff" /></>,
  <><circle cx="9" cy="9" r="7.800" fill="#2296d3" /><path d="M4 9l9.500-4-1.500 8.500-3-2-1.500 1.500-.5-3z" fill="#fff" /></>,
  <><path d="M4 1h10v5H4z" fill="#3fd0f5" /><path d="M4 5h10v7H4z" fill="#159be0" /><path d="M4 12h10v5H4z" fill="#0d5799" /></>,
  <><path d="M2 6l4-4h6v4H6v7H2z" fill="#2a84f5" /><path d="M6 2h7v4H6z" fill="#fbbc05" /><path d="M2 6l4-4v4z" fill="#ea4335" /><path d="M6 11.500h6V6h2l2.500-2.500v11L13 12v4H2v-3z" fill="#1ea84b" /><path d="M6 6h6v6H6z" fill="#fff" /></>,
  <><path d="M1 1h16v16H1z" fill="#4b1450" /><path d="M9 4l5 5-5 5-5-5z" fill="#d063b8" /><path d="M9 4l5 5-5 5z" fill="#f0b0e0" /></>,
  <><path d="M9.500 1H16v16H9.500z" fill="#d99b0b" /><path d="M6 5h6v12H6z" fill="#f2c230" /><path d="M2 9.500h6V17H2z" fill="#f8e08a" /></>,
];

function Taskbar() {
  return (
    <div className="flex h-8 shrink-0 items-center bg-[#d6d6d6] text-[12px] text-black">
      <div className="flex w-9 justify-center"><Svg s={16}><path d="M0 2.200l7-1v6.300H0zM8 1l8-1v7.500H8zM0 8.500h7v6.300l-7-1zM8 8.500h8V16l-8-1z" fill="#000" /></Svg></div>
      <div className="flex w-9 justify-center"><Svg s={18}><circle cx="11" cy="7" r="5.500" stroke="#000" strokeWidth="1.300" /><path d="M7 11L1 17" stroke="#000" strokeWidth="1.300" /></Svg></div>
      <div className="flex w-9 justify-center"><Svg s={18}><circle cx="9" cy="9" r="6.800" stroke="#000" strokeWidth="2" /></Svg></div>
      <div className="flex w-9 justify-center"><Svg s={18}><path d="M1.500 1v2.500h10V1M1.500 6.500h10v5.500h-10zM1.500 17v-2.500h10V17M15.500 1v3M15.500 9v8" stroke="#000" strokeWidth="1.200" /><path d="M14.500 5h2v2.500h-2z" fill="#000" /></Svg></div>
      <div className="flex w-[22px] pl-[5px]"><Svg s={6} h={18}><path d="M1.200 1v16M4.200 1v16" stroke="#000" strokeWidth="1.300" /></Svg></div>
      {apps.map((a, i) => (
        <div
          key={i}
          className={`flex h-8 w-[37px] items-center justify-center border-b-2 ${i === 18 ? "border-[#f9b208] bg-[#eeeeee]" : "border-transparent"} ${i === 3 ? "relative" : ""}`}
        >
          <Svg s={18}>{a}</Svg>
          {i === 3 && <div className="absolute bottom-[-2px] h-[2px] w-7 bg-[#f9b208]" />}
        </div>
      ))}
      <div className="ml-[152px] flex flex-1 items-center">
        <Svg s={24}>
          <circle cx="12" cy="11.500" r="10" fill="#1590d0" stroke="#fff" strokeWidth="1.500" />
          <text x="11" y="17.500" fontSize="16" fontWeight="700" fill="#fff" textAnchor="middle" fontFamily="Open Sans">?</text>
          <circle cx="19" cy="18" r="5" fill="#e81123" /><path d="M19 15v4M19 20v1.300" stroke="#fff" strokeWidth="1.500" />
        </Svg>
        <Svg s={16} className="ml-[15px]"><circle cx="5.500" cy="8" r="2.500" stroke="#000" strokeWidth="1.100" /><circle cx="10.500" cy="3.500" r="2.700" stroke="#000" strokeWidth="1.100" /><path d="M1 15.500q0-4.500 4.500-4.500t4.500 4.500M9 8.500q6-3 6 4" stroke="#000" strokeWidth="1.100" /></Svg>
        <Svg s={12} className="ml-4"><path d="M1 9l5-5.500L11 9" stroke="#000" strokeWidth="1.300" /></Svg>
        <Svg s={14} h={18} className="ml-[11px]"><path d="M3 5.500h7v7H3zM10 8l2.500-1.500v5L10 10M3 2.500q4-2 8 0M3 15.500q4 2 8 0" stroke="#000" strokeWidth="1.100" /></Svg>
        <Svg s={14} className="ml-3"><path d="M1 13A12 12 0 0 1 13 1M4 13a9 9 0 0 1 9-8.500M7.500 13A5.500 5.500 0 0 1 13 8M10.500 13A2.500 2.500 0 0 1 13 11" stroke="#000" strokeWidth="1.100" /></Svg>
        <Svg s={17} h={12} className="ml-[8px]"><path d="M1 1.500h13v8H1z" stroke="#000" strokeWidth="1.200" /><path d="M3 3.500h8v4H3zM14 4h2v3h-2z" fill="#000" /></Svg>
        <Svg s={18} h={16} className="ml-[5px]"><path d="M1 5.500h3l4-4v13l-4-4H1zM10 5q2 3 0 6M12.500 3.500q3 4.500 0 9M15 2q4 6 0 12" stroke="#000" strokeWidth="1.100" /></Svg>
        <div className="ml-[9px]"><T w={23}>ENG</T></div>
        <div className="ml-[13px] flex w-[58px] flex-col items-center text-[11.500px] leading-[15px]"><T w={27}>00:37</T><T w={58}>30-04-2022</T></div>
        <Svg s={18} className="ml-[17px]"><path d="M1.500 1.500h15v12h-5L9 16.500 6.500 13.500h-5z" stroke="#000" strokeWidth="1.200" /></Svg>
        <div className="ml-[20px] h-8 w-px bg-[#999]" />
      </div>
    </div>
  );
}

export default function App() {
  return (
    <div className="flex h-[768px] w-[1366px] flex-col overflow-hidden bg-[#f3f2f1] font-['Open_Sans',sans-serif]">
      <TitleBar />
      <Ribbon />
      <div className="flex h-[552px] shrink-0">
        <Rail />
        <div className="w-[930px] shrink-0">
          <Canvas />
          <PageTabs />
        </div>
        <Filters />
        <Visualizations />
        <Fields />
      </div>
      <div className="flex h-6 shrink-0 items-center justify-between border-t border-[#dcdad8] bg-[#f3f2f1] pl-[5px] pr-[5px] text-[12px] text-[#484644]">
        <T w={59}>Page 3 of 3</T>
        <T w={192}>Update available (click to download)</T>
      </div>
      <Taskbar />
    </div>
  );
}
